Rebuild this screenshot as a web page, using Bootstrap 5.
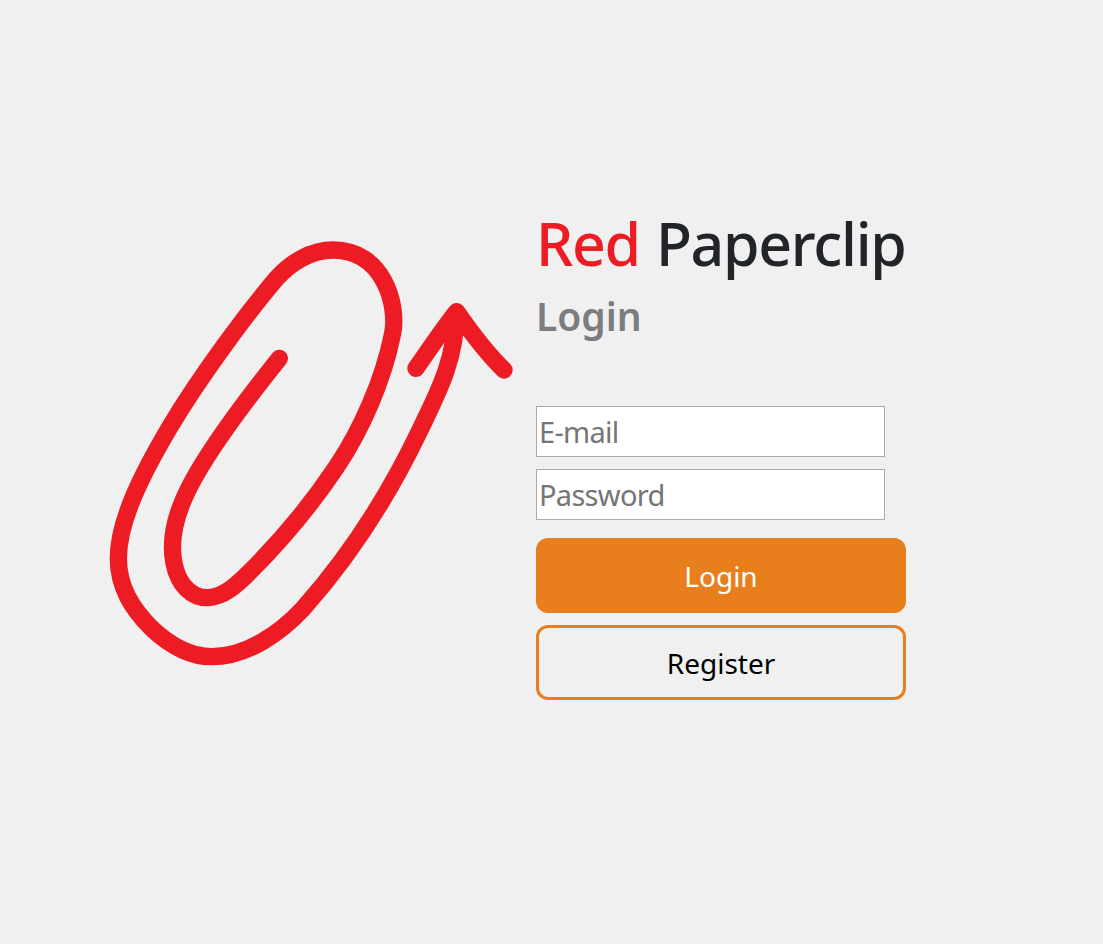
<!DOCTYPE html>
<html lang="en">
<head>
    <meta charset="UTF-8">
    <meta name="viewport" content="width=device-width, initial-scale=1.0">
    <title>Red Paperclip - Login</title>
    <link href="https://cdn.jsdelivr.net/npm/bootstrap@5.3.3/dist/css/bootstrap.min.css" rel="stylesheet">
    <style>
        body { background: #f0f0f0; font-family: "Noto Sans", "Open Sans", sans-serif; }
        .login-page { padding: 220px 0 0 90px; gap: 6px; }
        .clip-logo { width: 440px; height: 460px; flex: none; }
        .login-side { width: 370px; }
        .brand-title { font-size: 59px; font-weight: 500; line-height: 47px; color: #212529; margin: 0; white-space: nowrap; letter-spacing: -1.3px; word-spacing: 2px; }
        .brand-red { color: #ed1c24; }
        .brand-sub { font-size: 39px; font-weight: 600; line-height: 1; color: #7b7d80; margin: 29px 0 0 0; }
        .login-form { margin-top: 71px; }
        .field-input { display: block; width: 349px; height: 51px; padding: 0 2px; border: 1px solid #aaa; background: #fff; font-size: 29px; letter-spacing: -.7px; margin-bottom: 12px; outline: none; }
        .field-input::placeholder { color: #757575; }
        .btn-login, .btn-register { height: 75px; width: 370px; font-size: 28px; border-radius: 12px; display: block; }
        .btn-login { background: #e97e1d; border: 0; color: #fff; margin-top: 18px; }
        .btn-register { background: transparent; border: 3px solid #e97e1d; color: #000; margin-top: 12px; }
    </style>
</head>
<body>
    <div class="login-page d-flex align-items-start">
        <svg class="clip-logo" viewBox="0 0 1320 1380" fill="none" stroke="#ed1c24" stroke-width="52" stroke-linecap="round" stroke-linejoin="round">
            <path d="M568 415 C480 525 330 720 280 840 C250 910 240 970 252 1030 C265 1095 305 1135 355 1133 C400 1130 435 1100 480 1055 C570 965 660 860 740 740 C815 628 880 480 908 340 C925 255 880 90 730 90 C660 90 600 130 560 175 C470 280 330 470 240 620 C160 755 85 900 85 1015 C85 1100 125 1165 185 1225 C235 1272 295 1310 365 1310 C470 1310 570 1240 640 1165 C760 1030 880 860 990 630 C1040 525 1098 420 1098 280"/>
            <path d="M978 445 C1020 385 1060 325 1100 275 C1145 340 1190 400 1242 450"/>
        </svg>
        <div class="login-side">
            <h1 class="brand-title"><span class="brand-red">Red</span> Paperclip</h1>
            <h3 class="brand-sub">Login</h3>
            <form class="login-form">
                <input type="email" class="field-input" placeholder="E-mail">
                <input type="password" class="field-input" placeholder="Password">
                <button type="button" class="btn btn-login">Login</button>
                <button type="button" class="btn btn-register">Register</button>
            </form>
        </div>
    </div>
    <script src="https://cdn.jsdelivr.net/npm/bootstrap@5.3.3/dist/js/bootstrap.bundle.min.js"></script>
</body>
</html>
